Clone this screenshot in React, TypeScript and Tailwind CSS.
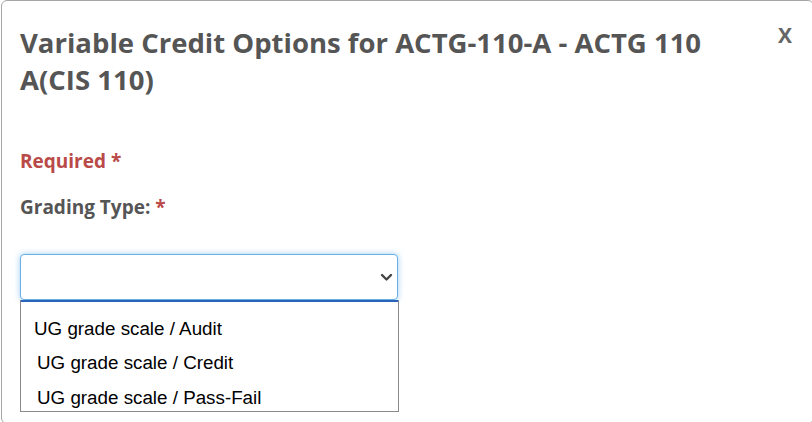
import React from 'react';

const options = [
  { label: 'UG grade scale / Audit', cls: 'h-[44px] pt-[10px] pl-[13px]' },
  { label: 'UG grade scale / Credit', cls: 'h-[35px] pl-[16px]' },
  { label: 'UG grade scale / Pass-Fail', cls: 'h-[35px] pl-[16px]' },
];

export default function App() {
  return (
    <div className="w-[812px] h-[422px] overflow-hidden bg-white">
      {/* Modal */}
      <div className="relative w-[813px] h-[424px] bg-white border border-[#a6a6a6] rounded-md ml-[1px] font-['Open_Sans',sans-serif]">
        {/* Header */}
        <div className="flex items-start justify-between pl-[18px] pr-[21px] pt-[23px]">
          <h2 className="w-[740px] text-[27.5px] leading-[37px] font-bold text-[#555]">
            Variable Credit Options for ACTG-110-A - ACTG 110 A(CIS 110)
          </h2>
          <button className="mt-[0px] text-[21px] leading-[22px] font-bold text-[#666]">X</button>
        </div>

        {/* Body */}
        <div className="pl-[18px] pt-[50px]">
          <p className="text-[19px] leading-[26px] font-bold text-[#b94a48]">Required *</p>
          <label className="block mt-[20px] text-[19px] leading-[26px] font-bold text-[#555]">
            Grading Type: <span className="text-[#b94a48]">*</span>
          </label>

          <div className="relative mt-[34px] w-[378px]">
            <div className="h-[46px] rounded-[4px] border border-[#66afe9] shadow-[0_0_6px_rgba(102,175,233,0.6)] bg-white flex items-center justify-end pr-[4px]">
              <svg width="13" height="9" viewBox="0 0 13 9" fill="none">
                <path d="M2 2 L6.5 6.5 L11 2" stroke="#444" strokeWidth="2.4" strokeLinecap="round" strokeLinejoin="round" />
              </svg>
            </div>

            {/* Open listbox */}
            <div className="absolute left-0 top-[46px] w-[379px] h-[112px] overflow-hidden border border-[#8a8a8a] border-t-0 bg-white font-['Liberation_Sans',Arial,sans-serif]">
              <div className="h-[2px] bg-[#2b63b8]" />
              {options.map((o) => (
                <div key={o.label} className={`flex items-center text-[18.8px] text-black ${o.cls}`}>
                  {o.label}
                </div>
              ))}
            </div>
          </div>
        </div>
      </div>
    </div>
  );
}
